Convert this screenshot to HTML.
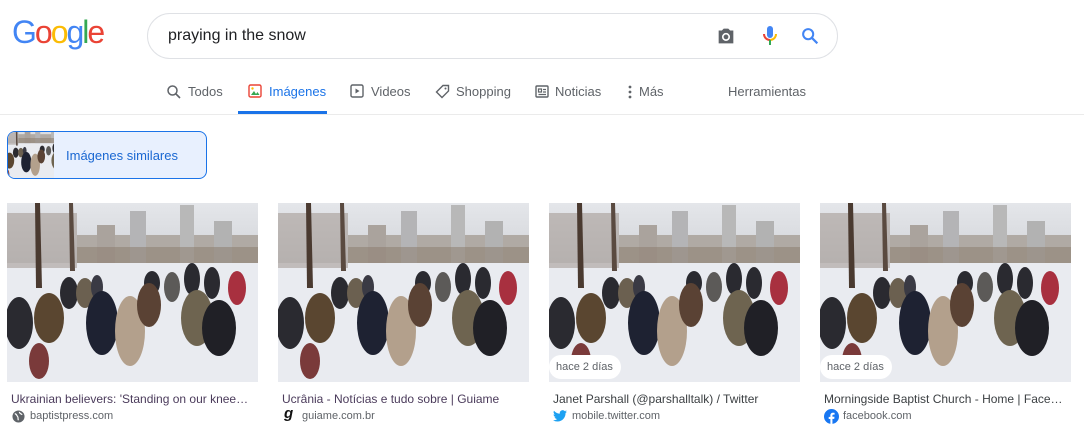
<!DOCTYPE html>
<html><head><meta charset="utf-8"><style>
*{margin:0;padding:0;box-sizing:border-box}
body{width:1084px;height:443px;background:#fff;font-family:"Liberation Sans",Arial,sans-serif;position:relative;overflow:hidden}
.abs{position:absolute}
.logo{left:12px;top:14px;font-size:32px;letter-spacing:-2px}
.search{left:147px;top:13px;width:691px;height:46px;border:1px solid #dfe1e5;border-radius:23px}
.q{left:168px;top:27px;font-size:16px;color:#202124}
.tab{top:84px;font-size:13px;color:#5f6368}
.sep{left:0;top:114px;width:1084px;height:1px;background:#ebebeb}
.ul{left:238px;top:111px;width:89px;height:3px;background:#1a73e8}
.sim{left:7px;top:131px;width:200px;height:48px;border:1px solid #1a73e8;border-radius:8px;background:#e8f0fe;overflow:hidden}
.sim span{position:absolute;left:58px;top:16px;font-size:13px;color:#1967d2}
.img{top:203px;width:251px;height:179px;overflow:hidden}
.t{top:392px;font-size:12px;color:#3c4043;white-space:nowrap;width:245px;overflow:hidden;text-overflow:ellipsis}
.s{top:410px;font-size:11px;color:#5f6368}
.badge{top:355px;height:24px;border-radius:12px;background:#fff;font-size:11px;color:#5f6368;padding:0 8px 0 7px;line-height:24px}
</style></head><body>
<svg width="0" height="0" style="position:absolute"><defs>
<linearGradient id="sky" x1="0" y1="0" x2="0" y2="1"><stop offset="0" stop-color="#e4e6ea"/><stop offset="1" stop-color="#d2d4d8"/></linearGradient>
<symbol id="sc" viewBox="0 0 251 179">
<rect width="251" height="179" fill="#e9ebf0"/>
<rect width="251" height="60" fill="url(#sky)"/>
<rect x="70" y="32" width="181" height="28" fill="#b0aaa4"/>
<rect x="123" y="8" width="16" height="52" fill="#b4b4b6"/>
<rect x="173" y="2" width="14" height="58" fill="#b8b8b8"/>
<rect x="207" y="18" width="18" height="42" fill="#b2b2b2"/>
<rect x="90" y="22" width="18" height="38" fill="#aaa39d"/>
<rect x="70" y="44" width="181" height="16" fill="#8c7e70" opacity=".55"/>
<rect x="0" y="10" width="70" height="55" fill="#9a8e86" opacity=".5"/>
<path d="M28 0h5l2 85h-6z" fill="#4a3a30"/>
<path d="M62 0h4l2 68h-5z" fill="#5a4a40"/>
<g fill="#2a2a30">
<ellipse cx="62" cy="90" rx="9" ry="16"/><ellipse cx="78" cy="90" rx="9" ry="15" fill="#6b6050"/>
<ellipse cx="90" cy="84" rx="6" ry="12" fill="#3a3a44"/><ellipse cx="145" cy="80" rx="8" ry="12"/>
<ellipse cx="165" cy="84" rx="8" ry="15" fill="#5c5a58"/><ellipse cx="185" cy="76" rx="8" ry="16"/>
<ellipse cx="205" cy="80" rx="8" ry="16"/><ellipse cx="230" cy="85" rx="9" ry="17" fill="#a8303f"/>
<ellipse cx="12" cy="120" rx="14" ry="26"/><ellipse cx="42" cy="115" rx="15" ry="25" fill="#5a4630"/>
<ellipse cx="95" cy="120" rx="16" ry="32" fill="#1e2232"/><ellipse cx="123" cy="128" rx="15" ry="35" fill="#b3a08c"/>
<ellipse cx="142" cy="102" rx="12" ry="22" fill="#5a4234"/><ellipse cx="190" cy="115" rx="16" ry="28" fill="#6e6450"/>
<ellipse cx="212" cy="125" rx="17" ry="28" fill="#202026"/><ellipse cx="32" cy="158" rx="10" ry="18" fill="#7a3a3a"/>
</g></symbol></defs></svg>

<div class="abs logo"><span style="color:#4285f4">G</span><span style="color:#ea4335">o</span><span style="color:#fbbc05">o</span><span style="color:#4285f4">g</span><span style="color:#34a853">l</span><span style="color:#ea4335">e</span></div>
<div class="abs search"></div>
<div class="abs q">praying in the snow</div>
<svg class="abs" style="left:715px;top:25px" width="22" height="22" viewBox="0 0 24 24"><path fill="#5f6368" d="M4 6h3.5l2-2h5l2 2H20v14H4z"/><circle cx="12" cy="13" r="3.5" fill="none" stroke="#fff" stroke-width="1.8"/></svg>
<svg class="abs" style="left:759px;top:24px" width="22" height="24" viewBox="0 0 22 24"><rect x="8" y="2" width="6" height="12" rx="3" fill="#4285f4"/><path d="M5 10a6 6 0 0 0 6 6" stroke="#ea4335" stroke-width="2" fill="none"/><path d="M17 10a6 6 0 0 1-6 6" stroke="#fbbc05" stroke-width="2" fill="none"/><rect x="10" y="16" width="2" height="5" fill="#34a853"/></svg>
<svg class="abs" style="left:799px;top:25px" width="22" height="22" viewBox="0 0 24 24"><circle cx="10" cy="10" r="5.5" fill="none" stroke="#4285f4" stroke-width="2.2"/><path d="M14 14l6 6" stroke="#4285f4" stroke-width="2.4"/></svg>

<svg class="abs" style="left:166px;top:84px" width="16" height="16" viewBox="0 0 16 16"><circle cx="6.5" cy="6.5" r="4.5" fill="none" stroke="#5f6368" stroke-width="1.5"/><path d="M10 10l4 4" stroke="#5f6368" stroke-width="1.6"/></svg>
<div class="abs tab" style="left:188px">Todos</div>
<svg class="abs" style="left:248px;top:84px" width="14" height="14" viewBox="0 0 14 14"><rect x="1" y="1" width="12" height="12" rx="1.5" fill="none" stroke="#ea4335" stroke-width="1.4"/><path d="M3 11l3-4 2 3 1.5-2 2 3z" fill="#34a853"/><circle cx="4.5" cy="4.5" r="1.2" fill="#fbbc05"/></svg>
<div class="abs tab" style="left:269px;color:#1a73e8">Imágenes</div>
<div class="abs ul"></div>
<svg class="abs" style="left:350px;top:84px" width="14" height="14" viewBox="0 0 14 14"><rect x="1" y="1" width="12" height="12" rx="1.5" fill="none" stroke="#5f6368" stroke-width="1.4"/><path d="M5.5 4.5v5l4-2.5z" fill="#5f6368"/></svg>
<div class="abs tab" style="left:371px">Videos</div>
<svg class="abs" style="left:435px;top:84px" width="15" height="15" viewBox="0 0 15 15"><path d="M8 1.5h5.5V7L7 13.5 1.5 8z" fill="none" stroke="#5f6368" stroke-width="1.4"/><circle cx="10.5" cy="4.5" r="1" fill="#5f6368"/></svg>
<div class="abs tab" style="left:456px">Shopping</div>
<svg class="abs" style="left:535px;top:85px" width="14" height="13" viewBox="0 0 14 13"><rect x="1" y="1" width="12" height="11" rx="1" fill="none" stroke="#5f6368" stroke-width="1.4"/><path d="M3.5 4h3v3h-3zM8 4.5h3M8 7h3M3.5 9.5h7.5" stroke="#5f6368" stroke-width="1.2" fill="none"/></svg>
<div class="abs tab" style="left:555px">Noticias</div>
<svg class="abs" style="left:627px;top:85px" width="6" height="14" viewBox="0 0 6 14"><circle cx="3" cy="2" r="1.4" fill="#5f6368"/><circle cx="3" cy="7" r="1.4" fill="#5f6368"/><circle cx="3" cy="12" r="1.4" fill="#5f6368"/></svg>
<div class="abs tab" style="left:639px">Más</div>
<div class="abs tab" style="left:728px">Herramientas</div>
<div class="abs sep"></div>

<div class="abs sim"><svg style="position:absolute;left:0;top:0" width="46" height="48"><use href="#sc" x="-12" y="-8" width="80" height="57"/></svg><span>Imágenes similares</span></div>

<svg class="abs img" style="left:7px"><use href="#sc" width="251" height="179"/></svg>
<svg class="abs img" style="left:278px"><use href="#sc" width="251" height="179"/></svg>
<svg class="abs img" style="left:549px"><use href="#sc" width="251" height="179"/></svg>
<svg class="abs img" style="left:820px"><use href="#sc" width="251" height="179"/></svg>
<div class="abs badge" style="left:549px">hace 2 días</div>
<div class="abs badge" style="left:820px">hace 2 días</div>

<div class="abs t" style="left:11px;color:#4b3b5b">Ukrainian believers: 'Standing on our knee…</div>
<div class="abs t" style="left:282px;color:#4b3b5b">Ucrânia - Notícias e tudo sobre | Guiame</div>
<div class="abs t" style="left:553px">Janet Parshall (@parshalltalk) / Twitter</div>
<div class="abs t" style="left:824px;width:244px">Morningside Baptist Church - Home | Face…</div>

<svg class="abs" style="left:12px;top:410px" width="13" height="13" viewBox="0 0 14 14"><circle cx="7" cy="7" r="6.5" fill="#5f6368"/><path d="M3 4c2 0 2 2 3 3s0 3 1 4M8 2c0 2 2 2 3 3" stroke="#fff" stroke-width="1.3" fill="none"/></svg>
<div class="abs s" style="left:30px">baptistpress.com</div>
<div class="abs" style="left:284px;top:405px;font-size:15px;font-weight:bold;font-style:italic;color:#111">g</div>
<div class="abs s" style="left:302px">guiame.com.br</div>
<svg class="abs" style="left:553px;top:410px" width="14" height="12" viewBox="0 0 24 20"><path fill="#1da1f2" d="M24 2.4a10 10 0 0 1-2.8.8A5 5 0 0 0 23.3.4a10 10 0 0 1-3.1 1.2A4.9 4.9 0 0 0 11.8 6 14 14 0 0 1 1.7.9a4.9 4.9 0 0 0 1.5 6.6A5 5 0 0 1 1 6.9a4.9 4.9 0 0 0 3.9 4.8 5 5 0 0 1-2.2.1 4.9 4.9 0 0 0 4.6 3.4A9.9 9.9 0 0 1 0 17.3 14 14 0 0 0 7.5 19.5c9 0 14-7.5 14-14v-.6A10 10 0 0 0 24 2.4z"/></svg>
<div class="abs s" style="left:572px">mobile.twitter.com</div>
<svg class="abs" style="left:824px;top:409px" width="15" height="15" viewBox="0 0 16 16"><circle cx="8" cy="8" r="8" fill="#1877f2"/><path d="M9 16v-5.5h1.9l.3-2.2H9V7c0-.6.2-1 1.1-1h1.2V4.1c-.2 0-.9-.1-1.7-.1-1.7 0-2.8 1-2.8 2.9v1.5H5v2.2h1.8V16z" fill="#fff"/></svg>
<div class="abs s" style="left:843px">facebook.com</div>
</body></html>
